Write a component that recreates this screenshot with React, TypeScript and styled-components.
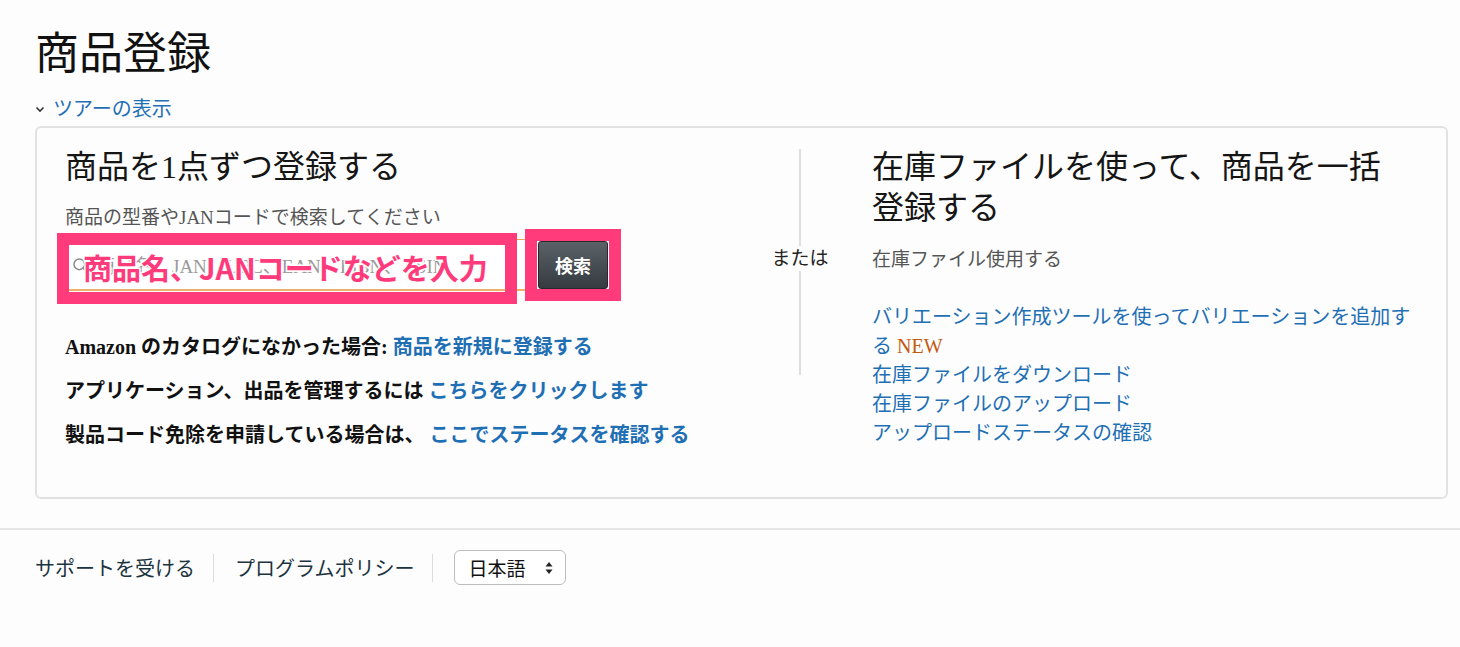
import React from "react";
import styled, { createGlobalStyle } from "styled-components";
import { Search } from "lucide-react";

const GlobalStyle = createGlobalStyle`
  html, body { margin: 0; padding: 0; background: #fdfdfd; }
  body { font-family: "Liberation Serif", "Noto Sans CJK JP", serif; color: #111; }
  * { box-sizing: border-box; }
`;

const Main = styled.main`
  padding: 28px 12px 0 35px;
`;

const Title = styled.h1`
  margin: 0;
  font-size: 44px;
  line-height: 54px;
  font-weight: 400;
  color: #111;
`;

const TourLink = styled.a`
  display: flex;
  align-items: center;
  gap: 8px;
  margin-top: 15px;
  font-size: 20px;
  line-height: 24px;
  color: #1f6fb5;
  text-decoration: none;
  cursor: pointer;
`;

const Card = styled.section`
  margin-top: 5px;
  border: 2px solid #e2e2e2;
  border-radius: 6px;
  padding: 19px 28px 40px 28px;
  display: grid;
  grid-template-columns: 705px 60px 1fr;
  background: #fdfdfd;
`;

const Column = styled.div<{ $pl?: number }>`
  display: flex;
  flex-direction: column;
  padding-left: ${(p) => p.$pl ?? 0}px;
`;

const Heading = styled.h2`
  margin: 0;
  font-size: 32px;
  line-height: 41px;
  font-weight: 400;
  color: #151515;
  max-width: 530px;
`;

const Sub = styled.p<{ $mt: number }>`
  margin: ${(p) => p.$mt}px 0 0;
  font-size: 19px;
  line-height: 26px;
  color: #555;
`;

const SearchRow = styled.div`
  display: flex;
  align-items: center;
  gap: 11px;
  margin-top: 8px;
`;

const InputWrap = styled.div`
  position: relative;
  width: 462px;
  height: 52px;
  border: 1px solid #e9a455;
  border-bottom: 2px solid #eeb068;
  background: #fff;
  display: flex;
  align-items: center;
  gap: 8px;
  padding-left: 6px;
  color: #999;
  font-size: 19px;
`;

const Placeholder = styled.span`
  color: #9a9a9a;
  white-space: nowrap;
  overflow: hidden;
`;

const AnnotFrame = styled.div<{ $l: number; $t: number; $w: number; $h: number }>`
  position: absolute;
  left: ${(p) => p.$l}px;
  top: ${(p) => p.$t}px;
  width: ${(p) => p.$w}px;
  height: ${(p) => p.$h}px;
  border: 12px solid #ff3b7c;
  pointer-events: none;
`;

const AnnotText = styled.span`
  position: absolute;
  left: 17px;
  top: 6px;
  font-family: "Noto Sans CJK JP", sans-serif;
  font-weight: 700;
  font-size: 29px;
  line-height: 42px;
  color: #ff3b7c;
  white-space: nowrap;
  -webkit-text-stroke: 3px #fff;
  paint-order: stroke fill;
`;

const ButtonWrap = styled.div`
  position: relative;
`;

const SearchButton = styled.button`
  width: 70px;
  height: 48px;
  border: 1px solid #25292c;
  border-radius: 3px;
  background: linear-gradient(#5a6268, #353b40);
  color: #fff;
  font-family: "Liberation Serif", "Noto Sans CJK JP", serif;
  font-weight: 700;
  font-size: 18px;
  cursor: pointer;
`;

const InfoLines = styled.div`
  margin-top: 34px;
  display: flex;
  flex-direction: column;
`;

const InfoLine = styled.p`
  margin: 0;
  font-size: 20px;
  line-height: 44px;
  font-weight: 700;
  color: #111;
  white-space: nowrap;
`;

const Link = styled.a<{ $bold?: boolean }>`
  color: #1f6fb5;
  font-weight: ${(p) => (p.$bold ? 700 : 400)};
  text-decoration: none;
  cursor: pointer;
`;

const Middle = styled.div`
  display: flex;
  flex-direction: column;
  align-items: center;
  padding-top: 2px;
`;

const VLine = styled.div<{ $h: number }>`
  width: 2px;
  height: ${(p) => p.$h}px;
  background: #dedede;
`;

const Or = styled.span`
  font-size: 19px;
  line-height: 22px;
  color: #222;
  margin: 2px 0 1px;
`;

const LinkList = styled.div`
  margin-top: 30px;
  display: flex;
  flex-direction: column;
  font-size: 20px;
  line-height: 29px;
`;

const New = styled.span`
  color: #c35a12;
`;

const Footer = styled.footer`
  margin-top: 29px;
  border-top: 2px solid #e6e6e6;
  padding: 20px 0 0 35px;
  display: flex;
  align-items: center;
`;

const FooterLink = styled.a`
  font-family: "Noto Sans CJK JP", sans-serif;
  font-size: 20px;
  line-height: 28px;
  color: #1c3340;
  text-decoration: none;
  cursor: pointer;
`;

const Sep = styled.span`
  width: 1px;
  height: 28px;
  background: #dcdcdc;
  margin: 0 21px 0 18px;
`;

const Select = styled.div`
  width: 112px;
  height: 35px;
  border: 1.5px solid #bdbdbd;
  border-radius: 6px;
  background: #fff;
  display: flex;
  align-items: center;
  justify-content: space-between;
  padding: 0 12px 0 13px;
  font-family: "Noto Sans CJK JP", sans-serif;
  font-size: 19px;
  color: #111;
`;

export default function App() {
  return (
    <>
      <GlobalStyle />
      <Main>
        <Title>商品登録</Title>
        <TourLink>
          <svg width="10" height="7" viewBox="0 0 10 7">
            <path d="M1.5 1.5 L5 5 L8.5 1.5" fill="none" stroke="#333" strokeWidth="1.6" />
          </svg>
          ツアーの表示
        </TourLink>
        <Card>
          <Column>
            <Heading>商品を1点ずつ登録する</Heading>
            <Sub $mt={17}>商品の型番やJANコードで検索してください</Sub>
            <SearchRow>
              <InputWrap>
                <Search size={16} color="#888" strokeWidth={2.2} />
                <Placeholder>商品名、JAN、UPC、EAN、ISBN、ASIN</Placeholder>
                <AnnotFrame $l={-9} $t={-7} $w={460} $h={71} />
                <AnnotText>商品名、JANコードなどを入力</AnnotText>
              </InputWrap>
              <ButtonWrap>
                <SearchButton>検索</SearchButton>
                <AnnotFrame $l={-13} $t={-12} $w={96} $h={72} />
              </ButtonWrap>
            </SearchRow>
            <InfoLines>
              <InfoLine>
                Amazon のカタログになかった場合: <Link $bold>商品を新規に登録する</Link>
              </InfoLine>
              <InfoLine>
                アプリケーション、出品を管理するには <Link $bold>こちらをクリックします</Link>
              </InfoLine>
              <InfoLine>
                製品コード免除を申請している場合は、 <Link $bold>ここでステータスを確認する</Link>
              </InfoLine>
            </InfoLines>
          </Column>
          <Middle>
            <VLine $h={97} />
            <Or>または</Or>
            <VLine $h={104} />
          </Middle>
          <Column $pl={42}>
            <Heading>在庫ファイルを使って、商品を一括登録する</Heading>
            <Sub $mt={18}>在庫ファイル使用する</Sub>
            <LinkList>
              <div>
                <Link>バリエーション作成ツールを使ってバリエーションを追加する</Link> <New>NEW</New>
              </div>
              <Link>在庫ファイルをダウンロード</Link>
              <Link>在庫ファイルのアップロード</Link>
              <Link>アップロードステータスの確認</Link>
            </LinkList>
          </Column>
        </Card>
      </Main>
      <Footer>
        <FooterLink>サポートを受ける</FooterLink>
        <Sep />
        <FooterLink>プログラムポリシー</FooterLink>
        <Sep />
        <Select>
          日本語
          <svg width="8" height="14" viewBox="0 0 8 14">
            <path d="M4 1 L7.5 5.5 L0.5 5.5 Z" fill="#222" />
            <path d="M4 13 L7.5 8.5 L0.5 8.5 Z" fill="#222" />
          </svg>
        </Select>
      </Footer>
    </>
  );
}
